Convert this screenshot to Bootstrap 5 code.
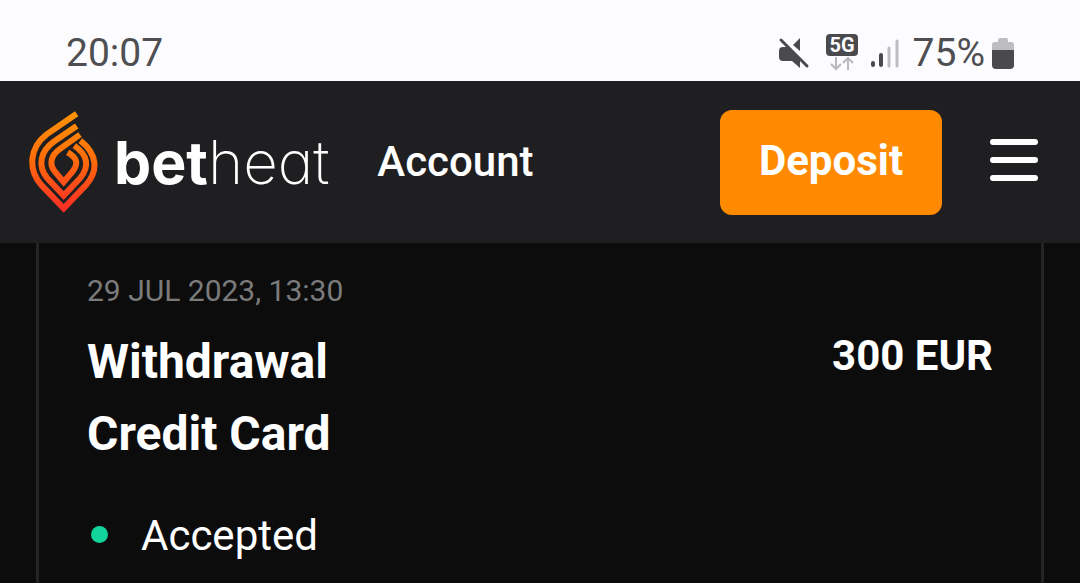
<!DOCTYPE html>
<html lang="en">
<head>
<meta charset="utf-8">
<meta name="viewport" content="width=device-width, initial-scale=1">
<title>Betheat – Account</title>
<link href="https://cdn.jsdelivr.net/npm/bootstrap@5.3.0/dist/css/bootstrap.min.css" rel="stylesheet">
<style>
  body { background: #0c0c0c; color: #fff; font-family: Roboto, "Liberation Sans", sans-serif; min-height: 100vh; }
  .status-bar { background: #fcfcff; color: #4f4f52; height: 81px; padding: 25px 66px 0 66px; font-size: 39px; line-height: 56px; font-weight: 400; }
  .status-icons { gap: 12px; }
  .charge { gap: 7px; }
  .top-bar { background: #1f1f21; height: 162px; padding: 0 34px 0 28px; }
  .brand-link { color: #fff; gap: 16px; }
  .brand-text { font-family: Inter, sans-serif; font-size: 60px; line-height: 64px; font-feature-settings: "cv11"; font-weight: 200; }
  .brand-text b { font-size: 59px; font-weight: 700; }
  .page-title { font-size: 42px; line-height: 56px; font-weight: 500; }
  .btn-deposit { background: #ff8a00; color: #fff; border: 0; border-radius: 12px; width: 222px; height: 105px; font-size: 42px; line-height: 56px; padding-bottom: 8px; font-weight: 700; }
  .btn-deposit:hover { background: #ff9a20; color: #fff; }
  .menu-btn { margin-left: 48px; }
  .history { margin: 0 36px; padding: 24px 48px 15px; border: solid #252527; border-width: 0 3px; }
  .entry-date { color: #7b7b7b; font-size: 30px; line-height: 48px; }
  .entry-row { padding-top: 11px; }
  .entry-kind { font-size: 48px; line-height: 72px; font-weight: 700; }
  .entry-sum { font-size: 42px; line-height: 60px; font-weight: 700; }
  .entry-state { font-size: 42px; line-height: 60px; margin-top: 36px; gap: 33px; padding-left: 4px; }
  .dot { width: 17px; height: 17px; border-radius: 50%; background: #12d39a; margin-bottom: 4px; }
</style>
</head>
<body class="d-flex flex-column">
<div class="status-bar d-flex justify-content-between align-items-start">
  <time>20:07</time>
  <div class="status-icons d-flex align-items-center">
    <svg width="32" height="32" viewBox="0 0 32 32" fill="#4a4a4d" aria-label="Muted"><path d="M22 1v13l-7-6zM5 10h5l12 12v9l-8-7H5q-4 0-4-4v-6q0-4 4-4z"/><path d="M5 1l27 28" stroke="#fcfcff" stroke-width="3"/><path d="M3 3l26 26" stroke="#4a4a4d" stroke-width="3" stroke-linecap="round"/></svg>
    <svg class="ms-1" width="33" height="38" viewBox="0 0 33 38" aria-label="5G"><rect x="0" y="0" width="32" height="22" rx="4" fill="#4a4a4d"/><text x="16" y="18" fill="#fcfcff" font-family="Roboto, sans-serif" font-size="20" font-weight="700" text-anchor="middle">5G</text><path d="M10 23v12m-5-5l5 5 5-5M22 36V24m-5 5l5-5 5 5" fill="none" stroke="#b9b9bb" stroke-width="2"/></svg>
    <svg width="30" height="32" viewBox="0 0 30 32" aria-label="Signal" stroke-width="4" stroke-linecap="round"><path d="M2 26v2M10 18v10" stroke="#4a4a4d"/><path d="M18 11v18M26 4v25" stroke="#bdbdbf" stroke-width="3"/></svg>
    <div class="charge d-flex align-items-center"><span>75%</span>
    <svg width="22" height="32" viewBox="0 0 22 32" aria-label="Battery"><path d="M0 13V8q0-3 3-3h3V3q0-2 2-2h6q2 0 2 2v2h3q3 0 3 3v5z" fill="#bdbdbf"/><path d="M0 13h22v15q0 4-4 4H4q-4 0-4-4z" fill="#4a4a4d"/></svg></div>
  </div>
</div>
<header class="top-bar d-flex align-items-center">
  <a href="#" class="brand-link d-flex align-items-center text-decoration-none">
    <svg width="70" height="104" viewBox="24 30 210 312" fill="none" stroke="url(#heat)" stroke-width="18" aria-hidden="true">
      <defs><linearGradient id="heat" gradientUnits="userSpaceOnUse" x1="0" y1="30" x2="0" y2="340"><stop offset="0" stop-color="#ff9608"/><stop offset=".45" stop-color="#ff6f08"/><stop offset="1" stop-color="#fb2a2a"/></linearGradient></defs>
      <path d="M170 41L80 103C30 142 22 206 63 254L131 325L199 254C236 211 232 162 181 122"/>
      <path d="M170 78L103 124C60 154 52 198 82 235L131 287L180 235C210 198 203 165 163 137"/>
      <path d="M180 104L121 146C90 168 88 194 104 214L131 246L158 214C176 190 172 174 143 157"/>
    </svg>
    <span class="brand-text"><b>bet</b>heat</span>
  </a>
  <h1 class="page-title mb-0 ms-5">Account</h1>
  <button type="button" class="btn btn-deposit ms-auto">Deposit</button>
  <button type="button" class="menu-btn btn border-0 p-0" aria-label="Menu">
    <svg class="d-block" width="56" height="52" viewBox="0 0 56 52" stroke="#fff" stroke-width="6" stroke-linecap="round"><path d="M3 6h42M3 24h42M3 42h42"/></svg>
  </button>
</header>
<main class="history flex-grow-1">
  <div class="entry-date">29 JUL 2023, 13:30</div>
  <div class="entry-row d-flex justify-content-between">
    <div class="entry-kind">Withdrawal<br>Credit Card</div>
    <div class="entry-sum">300 EUR</div>
  </div>
  <div class="entry-state d-flex align-items-center"><span class="dot"></span>Accepted</div>
</main>
<script src="https://cdn.jsdelivr.net/npm/bootstrap@5.3.0/dist/js/bootstrap.bundle.min.js"></script>
</body>
</html>
